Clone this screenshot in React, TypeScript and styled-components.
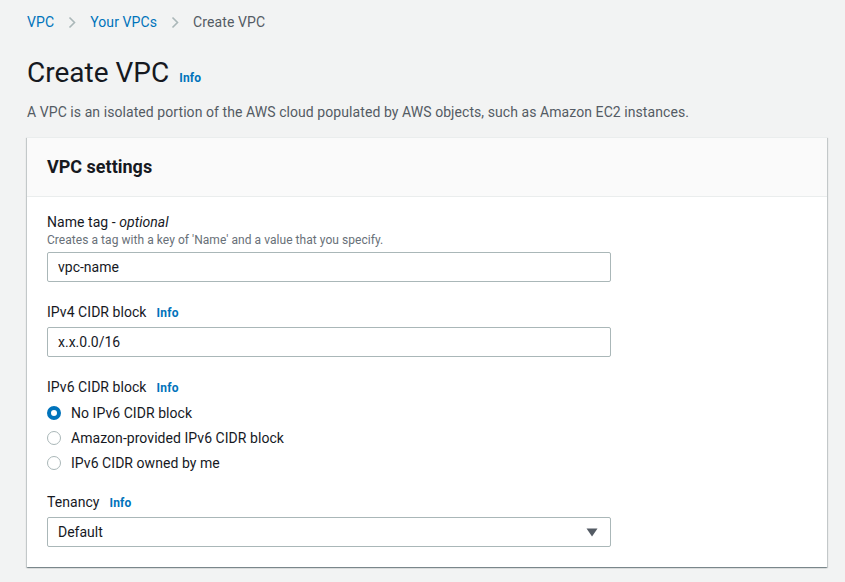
import React from "react";
import styled, { createGlobalStyle } from "styled-components";

const GlobalStyle = createGlobalStyle`
  html, body {
    margin: 0;
    padding: 0;
    background: #f2f3f3;
    font-family: Roboto, "Noto Sans", "Liberation Sans", sans-serif;
    color: #16191f;
    -webkit-font-smoothing: antialiased;
  }
  * { box-sizing: border-box; }
`;

const Page = styled.div`
  padding: 12px 18px 0 27px;
  width: 845px;
  height: 582px;
  overflow: hidden;
`;

const Breadcrumbs = styled.nav`
  display: flex;
  align-items: center;
  gap: 14px;
  height: 20px;
  font-size: 14px;
  line-height: 20px;
`;

const Crumb = styled.span<{ $current?: boolean }>`
  color: ${(p) => (p.$current ? "#545b64" : "#0073bb")};
  font-weight: 400;
  letter-spacing: 0.1px;
`;

const Chevron = () => (
  <svg width="8" height="13" viewBox="0 0 8 13" fill="none">
    <path d="M1.5 1.5 L6.5 6.5 L1.5 11.5" stroke="#aab7b8" strokeWidth="1.6" />
  </svg>
);

const TitleRow = styled.div`
  display: flex;
  align-items: baseline;
  gap: 10px;
  margin-top: 23px;
`;

const Title = styled.h1`
  margin: 0;
  font-size: 28px;
  line-height: 36px;
  font-weight: 400;
  color: #16191f;
`;

const InfoLink = styled.a`
  font-size: 12px;
  font-weight: 700;
  color: #0073bb;
  text-decoration: none;
  letter-spacing: 0.2px;
`;

const Description = styled.p`
  margin: 11px 0 0;
  font-size: 14px;
  line-height: 20px;
  color: #545b64;
  letter-spacing: 0.07px;
`;

const Card = styled.section`
  margin-top: 15px;
  width: 800px;
  background: #fff;
  box-shadow: 0 1px 1px 0 rgba(0, 28, 36, 0.3), 1px 1px 1px 0 rgba(0, 28, 36, 0.15),
    -1px 1px 1px 0 rgba(0, 28, 36, 0.15);
  border-top: 1px solid #eaeded;
`;

const CardHeader = styled.header`
  background: #fafafa;
  border-bottom: 1px solid #eaeded;
  padding: 18px 20px 19px;
`;

const CardTitle = styled.h2`
  margin: 0;
  font-size: 18px;
  line-height: 21px;
  font-weight: 700;
  color: #16191f;
`;

const CardBody = styled.div`
  padding: 15px 20px 20px;
  display: flex;
  flex-direction: column;
  gap: 20px;
`;

const Field = styled.div<{ $tight?: boolean }>`
  display: flex;
  flex-direction: column;
  margin-top: ${(p) => (p.$tight ? "-3px" : "0")};
`;

const LabelRow = styled.div`
  display: flex;
  align-items: baseline;
  gap: 10px;
  font-size: 14px;
  line-height: 20px;
  color: #16191f;
`;

const Label = styled.label`
  font-size: 14px;
  line-height: 20px;
  color: #16191f;
  letter-spacing: 0.05px;
  em { font-style: italic; }
`;

const Hint = styled.div`
  font-size: 12px;
  line-height: 16px;
  color: #687078;
  letter-spacing: 0.05px;
`;

const Input = styled.input`
  margin-top: 4px;
  width: 564px;
  height: 30px;
  border: 1px solid #aab7b8;
  border-radius: 2px;
  padding: 0 10px;
  font-family: inherit;
  font-size: 14px;
  color: #16191f;
  background: #fff;
  outline: none;
`;

const RadioGroup = styled.div`
  margin-top: 2px;
  display: flex;
  flex-direction: column;
`;

const RadioRow = styled.label`
  display: flex;
  align-items: center;
  gap: 10px;
  height: 25px;
  font-size: 14px;
  color: #16191f;
  letter-spacing: 0.05px;
`;

const RadioDot = styled.span<{ $checked?: boolean }>`
  width: 14px;
  height: 14px;
  border-radius: 50%;
  box-sizing: border-box;
  border: ${(p) => (p.$checked ? "4.5px solid #0073bb" : "1.5px solid #aab7b8")};
  background: #fff;
  flex: none;
`;

const Select = styled.div`
  margin-top: 4px;
  width: 564px;
  height: 30px;
  border: 1px solid #aab7b8;
  border-radius: 2px;
  padding: 0 12px 0 10px;
  display: flex;
  align-items: center;
  justify-content: space-between;
  font-size: 14px;
  color: #16191f;
  background: #fff;
`;

const Caret = () => (
  <svg width="12" height="9" viewBox="0 0 12 9">
    <path d="M0.5 0.5 H11.5 L6 8.5 Z" fill="#545b64" />
  </svg>
);

const radios = [
  { label: "No IPv6 CIDR block", checked: true },
  { label: "Amazon-provided IPv6 CIDR block", checked: false },
  { label: "IPv6 CIDR owned by me", checked: false },
];

export default function App() {
  return (
    <>
      <GlobalStyle />
      <Page>
        <Breadcrumbs>
          <Crumb>VPC</Crumb>
          <Chevron />
          <Crumb>Your VPCs</Crumb>
          <Chevron />
          <Crumb $current>Create VPC</Crumb>
        </Breadcrumbs>
        <TitleRow>
          <Title>Create VPC</Title>
          <InfoLink>Info</InfoLink>
        </TitleRow>
        <Description>
          A VPC is an isolated portion of the AWS cloud populated by AWS objects, such as Amazon EC2 instances.
        </Description>
        <Card>
          <CardHeader>
            <CardTitle>VPC settings</CardTitle>
          </CardHeader>
          <CardBody>
            <Field>
              <Label>
                Name tag - <em>optional</em>
              </Label>
              <Hint>Creates a tag with a key of 'Name' and a value that you specify.</Hint>
              <Input defaultValue="vpc-name" />
            </Field>
            <Field>
              <LabelRow>
                <Label>IPv4 CIDR block</Label>
                <InfoLink>Info</InfoLink>
              </LabelRow>
              <Input defaultValue="x.x.0.0/16" />
            </Field>
            <Field>
              <LabelRow>
                <Label>IPv6 CIDR block</Label>
                <InfoLink>Info</InfoLink>
              </LabelRow>
              <RadioGroup>
                {radios.map((r) => (
                  <RadioRow key={r.label}>
                    <RadioDot $checked={r.checked} />
                    {r.label}
                  </RadioRow>
                ))}
              </RadioGroup>
            </Field>
            <Field $tight>
              <LabelRow>
                <Label>Tenancy</Label>
                <InfoLink>Info</InfoLink>
              </LabelRow>
              <Select>
                <span>Default</span>
                <Caret />
              </Select>
            </Field>
          </CardBody>
        </Card>
      </Page>
    </>
  );
}
